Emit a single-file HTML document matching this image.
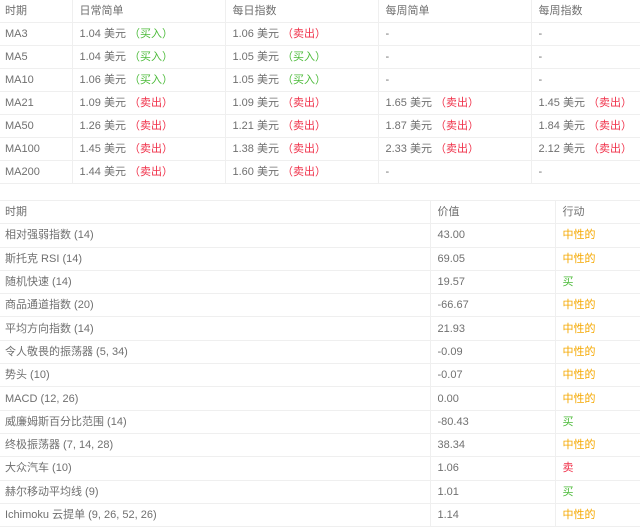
<!DOCTYPE html><html><head><meta charset="utf-8"><style>
body{margin:0;width:640px;height:528px;overflow:hidden;background:#fff;font-family:"Liberation Sans","Noto Sans CJK SC",sans-serif;font-size:11px;color:#707070}
table{border-collapse:collapse;width:640px;table-layout:fixed;position:absolute;left:0}
td{border:1px solid #efefef;padding:0 0 0 7px;white-space:nowrap;overflow:hidden;vertical-align:middle}
td span,td{line-height:14px}
tr td:first-child{border-left:none;padding-left:5px}
tr td:last-child{border-right:none}
.g{color:#4cbb3a}.r{color:#f0314a}.y{color:#f5a800}
#t1{top:0}#t1 td{height:22px}
#t2{top:200px}#t2 td{height:22.3px}
#t1 tr:first-child td{border-top:none}
</style></head><body>
<table id="t1"><colgroup><col style="width:72px"><col style="width:153px"><col style="width:153px"><col style="width:153px"><col></colgroup>
<tr><td>时期</td><td>日常简单</td><td>每日指数</td><td>每周简单</td><td>每周指数</td></tr>
<tr><td>MA3</td><td>1.04 美元 <span class="g">（买入）</span></td><td>1.06 美元 <span class="r">（卖出）</span></td><td>-</td><td>-</td></tr>
<tr><td>MA5</td><td>1.04 美元 <span class="g">（买入）</span></td><td>1.05 美元 <span class="g">（买入）</span></td><td>-</td><td>-</td></tr>
<tr><td>MA10</td><td>1.06 美元 <span class="g">（买入）</span></td><td>1.05 美元 <span class="g">（买入）</span></td><td>-</td><td>-</td></tr>
<tr><td>MA21</td><td>1.09 美元 <span class="r">（卖出）</span></td><td>1.09 美元 <span class="r">（卖出）</span></td><td>1.65 美元 <span class="r">（卖出）</span></td><td>1.45 美元 <span class="r">（卖出）</span></td></tr>
<tr><td>MA50</td><td>1.26 美元 <span class="r">（卖出）</span></td><td>1.21 美元 <span class="r">（卖出）</span></td><td>1.87 美元 <span class="r">（卖出）</span></td><td>1.84 美元 <span class="r">（卖出）</span></td></tr>
<tr><td>MA100</td><td>1.45 美元 <span class="r">（卖出）</span></td><td>1.38 美元 <span class="r">（卖出）</span></td><td>2.33 美元 <span class="r">（卖出）</span></td><td>2.12 美元 <span class="r">（卖出）</span></td></tr>
<tr><td>MA200</td><td>1.44 美元 <span class="r">（卖出）</span></td><td>1.60 美元 <span class="r">（卖出）</span></td><td>-</td><td>-</td></tr>
</table>
<table id="t2"><colgroup><col style="width:430px"><col style="width:125px"><col></colgroup>
<tr><td>时期</td><td>价值</td><td>行动</td></tr>
<tr><td>相对强弱指数 (14)</td><td>43.00</td><td class="y">中性的</td></tr>
<tr><td>斯托克 RSI (14)</td><td>69.05</td><td class="y">中性的</td></tr>
<tr><td>随机快速 (14)</td><td>19.57</td><td class="g">买</td></tr>
<tr><td>商品通道指数 (20)</td><td>-66.67</td><td class="y">中性的</td></tr>
<tr><td>平均方向指数 (14)</td><td>21.93</td><td class="y">中性的</td></tr>
<tr><td>令人敬畏的振荡器 (5, 34)</td><td>-0.09</td><td class="y">中性的</td></tr>
<tr><td>势头 (10)</td><td>-0.07</td><td class="y">中性的</td></tr>
<tr><td>MACD (12, 26)</td><td>0.00</td><td class="y">中性的</td></tr>
<tr><td>威廉姆斯百分比范围 (14)</td><td>-80.43</td><td class="g">买</td></tr>
<tr><td>终极振荡器 (7, 14, 28)</td><td>38.34</td><td class="y">中性的</td></tr>
<tr><td>大众汽车 (10)</td><td>1.06</td><td class="r">卖</td></tr>
<tr><td>赫尔移动平均线 (9)</td><td>1.01</td><td class="g">买</td></tr>
<tr><td>Ichimoku 云提单 (9, 26, 52, 26)</td><td>1.14</td><td class="y">中性的</td></tr>
</table>
</body></html>
